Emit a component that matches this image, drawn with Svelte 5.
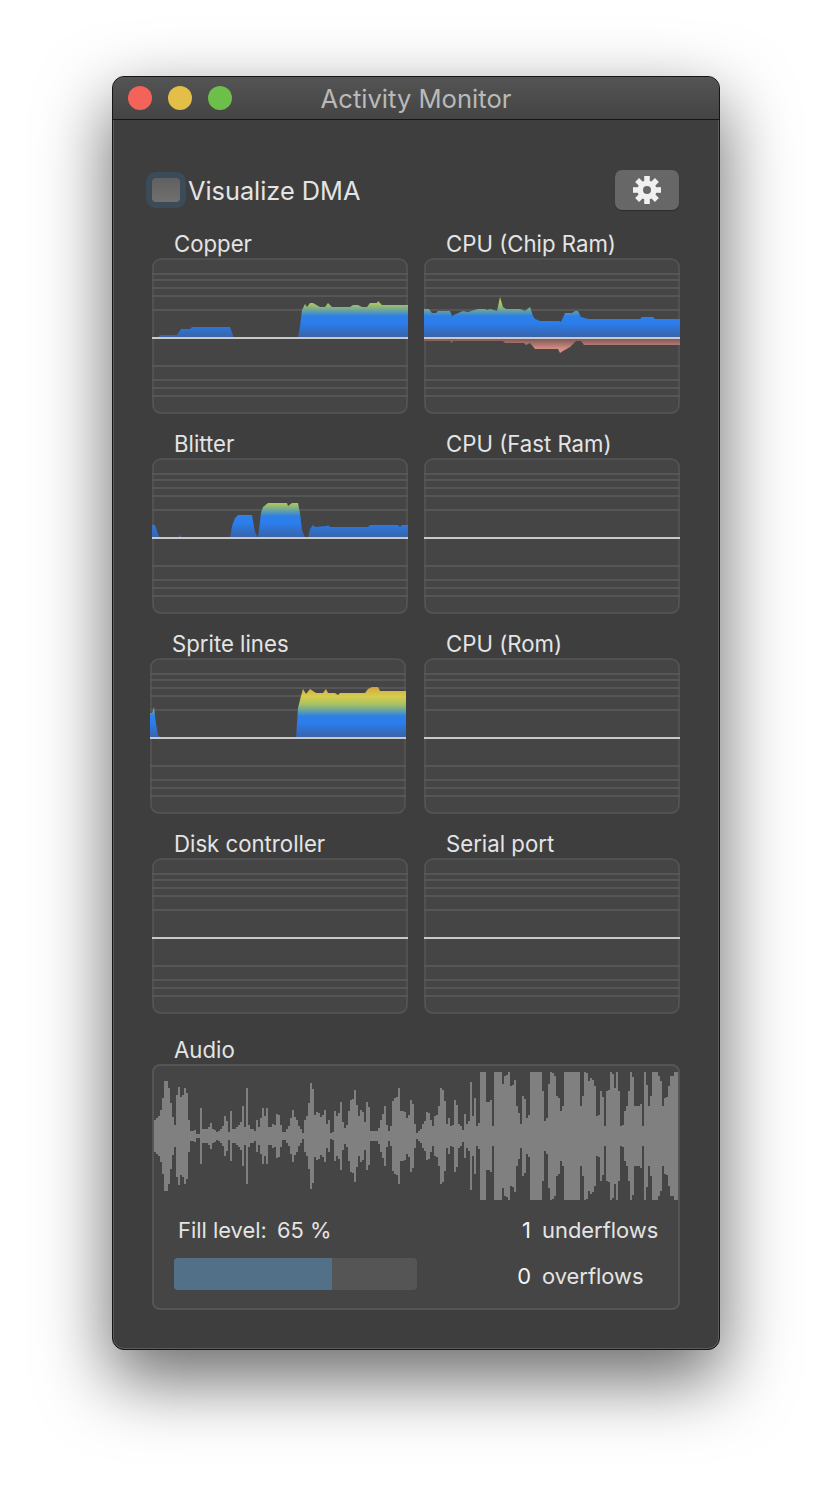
<script>
    // chart points are [x, height above the baseline], in plot pixels
    const BASE = 80;
    const gridLines = [16, 22, 30, 38, 52, 108, 122, 130, 138];
    const teeth = [0, 45, 90, 135, 180, 225, 270, 315];

    const copper = [[0,0],[5,0],[8,3],[25,3],[29,9],[38,9],[40,11],[78,11],[82,0],[146,0],[148,12],[150,28],[153,34],[155,31],[158,35],[161,35],[168,31],[173,31],[176,35],[180,31],[198,31],[201,33],[206,33],[210,31],[215,31],[218,35],[225,35],[226,37],[230,33],[256,33]];
    const chipUp = [[0,29],[5,29],[8,25],[12,25],[14,27],[26,27],[28,22],[32,24],[39,27],[44,26],[54,29],[61,29],[63,28],[66,29],[73,27],[76,41],[79,31],[82,29],[96,29],[101,27],[106,31],[109,22],[111,19],[116,17],[135,17],[137,16],[141,25],[148,25],[151,27],[154,27],[157,21],[164,19],[216,19],[218,21],[229,21],[231,19],[256,19]];
    const chipDown = [[0,3],[26,3],[28,5],[29,3],[79,3],[81,5],[100,5],[102,7],[106,5],[111,11],[134,11],[136,15],[139,13],[146,9],[152,3],[157,3],[160,7],[256,7]];
    const blitter = [[0,13],[3,13],[6,4],[8,0],[26,0],[28,3],[30,0],[78,0],[80,12],[83,20],[86,23],[100,23],[103,6],[106,0],[109,25],[111,31],[116,35],[135,35],[136,32],[140,35],[146,35],[148,25],[150,8],[153,0],[156,0],[158,9],[161,13],[163,11],[175,12],[176,13],[178,11],[216,11],[218,13],[246,13],[248,11],[250,13],[256,13]];
    const sprite = [[0,25],[2,25],[4,31],[6,14],[8,3],[11,0],[146,0],[148,30],[151,42],[153,49],[156,44],[160,49],[163,47],[166,45],[173,45],[176,49],[178,45],[185,45],[188,43],[190,45],[215,45],[218,49],[222,51],[228,51],[230,47],[256,47]];

    const charts = [
        { name: 'Copper', up: copper },
        { name: 'CPU (Chip Ram)', up: chipUp, down: chipDown },
        { name: 'Blitter', up: blitter },
        { name: 'CPU (Fast Ram)' },
        { name: 'Sprite lines', up: sprite, shifted: true },
        { name: 'CPU (Rom)' },
        { name: 'Disk controller' },
        { name: 'Serial port' }
    ];

    function area(points, dir) {
        const line = points.map(([x, h]) => `L${x} ${BASE + dir * h}`).join('');
        return `M0 ${BASE}${line}L256 ${BASE}Z`;
    }

    // waveform envelope traced in two halves, x given at 3x scale
    const waveLeft = [[22,13],[28,16],[36,18],[45,26],[52,38],[58,55],[64,55],[70,48],[76,33],[82,19],[90,11],[97,41],[103,49],[109,39],[115,41],[122,48],[128,43],[134,16],[140,5],[150,6],[158,2],[170,28],[174,7],[185,7],[195,13],[205,7],[215,4],[228,7],[237,20],[241,5],[248,15],[253,4],[260,25],[265,7],[275,9],[285,14],[291,30],[297,9],[303,48],[308,11],[320,7],[327,5],[333,16],[340,9],[350,18],[356,28],[362,20],[368,28],[374,9],[381,12],[390,11],[398,22],[408,11],[415,4],[425,7],[435,18],[441,26],[450,19],[462,10],[472,3],[480,16],[490,33],[500,53],[508,21],[518,24],[528,19],[537,26],[543,12],[550,16],[560,3],[570,25],[577,20],[585,34],[591,14],[600,8],[610,25],[620,36],[627,46],[640,20],[650,26],[657,14],[668,34],[680,5],[695,5],[705,16],[717,30],[722,12],[730,5],[745,35],[752,38],[760,48],[770,25],[780,24],[786,18],[800,36],[810,12]];
    const waveRight = [[0,3],[12,5],[22,12],[30,15],[38,24],[46,16],[55,10],[62,20],[70,30],[80,48],[88,35],[95,12],[104,18],[110,10],[122,36],[130,12],[145,6],[152,22],[158,12],[165,54],[172,20],[178,38],[186,10],[196,22],[200,64],[212,64],[218,34],[226,36],[235,10],[240,64],[258,64],[264,52],[270,60],[280,64],[290,50],[300,56],[305,30],[318,12],[326,40],[335,18],[345,28],[348,64],[380,64],[385,45],[392,15],[400,52],[410,64],[418,60],[425,40],[432,38],[440,25],[445,30],[450,64],[492,64],[498,30],[505,40],[512,64],[520,55],[528,58],[540,50],[548,20],[560,45],[570,10],[578,45],[590,64],[598,48],[605,64],[612,45],[620,10],[630,25],[640,45],[650,64],[660,30],[670,30],[676,32],[682,10],[690,64],[700,30],[708,40],[715,64],[725,64],[735,55],[745,30],[752,38],[760,50],[770,60],[778,64],[790,64]];
    const wavePts = [
        ...waveLeft.map(([x, h]) => [x / 3 - 9, h]),
        ...waveRight.map(([x, h]) => [x / 3 + 261, h])
    ].sort((a, b) => a[0] - b[0]);

    function waveHeight(x) {
        const inColumn = wavePts.filter((p) => p[0] >= x && p[0] < x + 2).map((p) => p[1]);
        if (inColumn.length) return Math.max(...inColumn);
        const next = wavePts.findIndex((p) => p[0] >= x);
        if (next <= 0) return 3;
        const [x0, h0] = wavePts[next - 1];
        const [x1, h1] = wavePts[next];
        // geometric blend keeps the peaks narrow
        const t = (x - x0) / (x1 - x0);
        return Math.pow(Math.max(h0, 1), 1 - t) * Math.pow(Math.max(h1, 1), t);
    }

    function wavePath() {
        let top = 'M0 70';
        let bottom = '';
        for (let x = 0; x < 524; x += 2) {
            const h = Math.min(64, Math.round(waveHeight(x)));
            top += `L${x} ${70 - h}L${x + 2} ${70 - h}`;
            bottom = `L${x + 2} ${70 + h}L${x} ${70 + h}` + bottom;
        }
        return `${top}L524 70${bottom}Z`;
    }
    const wave = wavePath();
</script>

<div class="page">
    <div class="window">
        <header class="titlebar">
            <div class="lights">
                <span class="light red"></span>
                <span class="light yellow"></span>
                <span class="light green"></span>
            </div>
            <span class="title">Activity Monitor</span>
        </header>

        <main class="content">
            <div class="toolbar">
                <label class="check">
                    <span class="box"></span>
                    <span>Visualize DMA</span>
                </label>
                <button class="gear" aria-label="Settings">
                    <svg width="28" height="28" viewBox="0 0 28 28">
                        <circle cx="14" cy="14" r="6.8" fill="none" stroke="#f0f0f0" stroke-width="5.6" />
                        {#each teeth as angle}
                            <rect x="11.2" y="0" width="5.6" height="6" fill="#f0f0f0" transform="rotate({angle} 14 14)" />
                        {/each}
                    </svg>
                </button>
            </div>

            <div class="charts">
                {#each charts as chart, i}
                    <section class:shifted={chart.shifted}>
                        <h3>{chart.name}</h3>
                        <svg class="plot" width="256" height="156" viewBox="0 0 256 156">
                            <defs>
                                <linearGradient id="up-{i}" gradientUnits="userSpaceOnUse" x1="0" y1="80" x2="0" y2="28">
                                    <stop offset="0" stop-color="#3b62a4" />
                                    <stop offset="0.16" stop-color="#3071cc" />
                                    <stop offset="0.3" stop-color="#2b7eee" />
                                    <stop offset="0.42" stop-color="#2e80e6" />
                                    <stop offset="0.54" stop-color="#6da69c" />
                                    <stop offset="0.65" stop-color="#a8c260" />
                                    <stop offset="0.8" stop-color="#d6cc4e" />
                                    <stop offset="0.92" stop-color="#d5b444" />
                                    <stop offset="1" stop-color="#cf9640" />
                                </linearGradient>
                                <linearGradient id="down-{i}" gradientUnits="userSpaceOnUse" x1="0" y1="81" x2="0" y2="96">
                                    <stop offset="0" stop-color="#7d5a58" />
                                    <stop offset="0.6" stop-color="#d0897f" />
                                    <stop offset="1" stop-color="#dc9a90" />
                                </linearGradient>
                            </defs>
                            <rect x="1" y="1" width="254" height="154" rx="8" fill="#454545" stroke="#555" stroke-width="1.6" />
                            {#each gridLines as y}
                                <rect x="0" y={y - 0.8} width="256" height="1.6" fill="#5b5b5b" />
                            {/each}
                            {#if chart.up}
                                <path d={area(chart.up, -1)} fill="url(#up-{i})" />
                            {/if}
                            {#if chart.down}
                                <path d={area(chart.down, 1)} fill="url(#down-{i})" />
                            {/if}
                            <rect x="0" y="79" width="256" height="2" fill="#c9c9c9" />
                        </svg>
                    </section>
                {/each}
            </div>

            <h3 class="audio-label">Audio</h3>
            <section class="audio">
                <svg class="wave" width="524" height="134" viewBox="0 0 524 134">
                    <path d={wave} fill="#808080" shape-rendering="crispEdges" />
                </svg>
                <div class="stats">
                    <div class="fill">
                        <div class="fill-text"><span>Fill level:</span><span>65 %</span></div>
                        <div class="meter"><div class="meter-value" style="width: {65}%"></div></div>
                    </div>
                    <dl class="flows">
                        <dt>1</dt><dd>underflows</dd>
                        <dt>0</dt><dd>overflows</dd>
                    </dl>
                </div>
            </section>
        </main>
    </div>
</div>

<style>
    :global(body) {
        background: #fff;
        font-family: Inter, "Liberation Sans", sans-serif;
    }

    .page {
        box-sizing: border-box;
        height: 1498px;
        padding: 76px 0 0 112px;
    }

    .window {
        box-sizing: border-box;
        width: 608px;
        height: 1274px;
        background: #3e3e3e;
        border: 1px solid #161616;
        border-radius: 12px;
        box-shadow: inset 0 0 0 1px #5c5c5c, 0 28px 70px 2px rgba(0, 0, 0, 0.58);
        overflow: hidden;
    }

    .titlebar {
        box-sizing: border-box;
        height: 43px;
        display: grid;
        grid-template-columns: 1fr auto 1fr;
        align-items: center;
        padding: 0 15px;
        background: linear-gradient(#545454, #444);
        border-bottom: 1px solid #151515;
    }

    .lights {
        display: flex;
        gap: 16px;
    }

    .light {
        width: 24px;
        height: 24px;
        border-radius: 50%;
    }
    .red { background: #f4635a; }
    .yellow { background: #e3bf48; }
    .green { background: #6cc04a; }

    .title {
        font-size: 25.6px;
        color: #b9b9b9;
    }

    .content {
        padding: 50px 40px 0 39px;
    }

    .toolbar {
        display: flex;
        justify-content: space-between;
        align-items: center;
        height: 40px;
    }

    .check {
        display: flex;
        align-items: center;
        gap: 8px;
        font-size: 25.3px;
        color: #e4e4e4;
    }

    .box {
        width: 28px;
        height: 24px;
        border-radius: 4px;
        background: linear-gradient(#606060, #707070);
        box-shadow: 0 0 0 6px #3c4b58;
    }

    .gear {
        width: 64px;
        height: 40px;
        padding: 0;
        display: flex;
        align-items: center;
        justify-content: center;
        background: #676767;
        border: none;
        border-radius: 7px;
        box-shadow: 0 1px 1px rgba(0, 0, 0, 0.3);
    }

    .charts {
        display: grid;
        grid-template-columns: 256px 256px;
        gap: 16px;
        margin-top: 20px;
    }

    .shifted {
        margin-left: -2px;
    }

    h3 {
        margin: 0;
        padding-left: 22px;
        height: 28px;
        line-height: 28px;
        font-size: 22.2px;
        font-weight: 400;
        color: #e4e4e4;
    }

    .plot {
        display: block;
    }

    .audio-label {
        margin-top: 22px;
    }

    .audio {
        box-sizing: border-box;
        width: 528px;
        height: 246px;
        background: #454545;
        border: 2px solid #555;
        border-radius: 8px;
        overflow: hidden;
    }

    .wave {
        display: block;
    }

    .stats {
        display: grid;
        grid-template-columns: 244px 1fr;
        padding: 13px 0 0 20px;
        font-size: 21.9px;
        color: #e4e4e4;
    }

    .fill-text {
        display: flex;
        gap: 10px;
        height: 34px;
        line-height: 34px;
        padding-left: 4px;
    }

    .meter {
        width: 243px;
        margin-top: 11px;
        height: 32px;
        background: #555;
        border-radius: 4px;
        overflow: hidden;
    }

    .meter-value {
        height: 100%;
        background: #537089;
    }

    .flows {
        display: grid;
        grid-template-columns: 113px 1fr;
        grid-template-rows: 34px 34px;
        column-gap: 11px;
        row-gap: 12px;
        margin: 0;
        line-height: 34px;
    }

    dt {
        text-align: right;
        color: #f4f4f4;
    }

    dd {
        margin: 0;
    }
</style>
